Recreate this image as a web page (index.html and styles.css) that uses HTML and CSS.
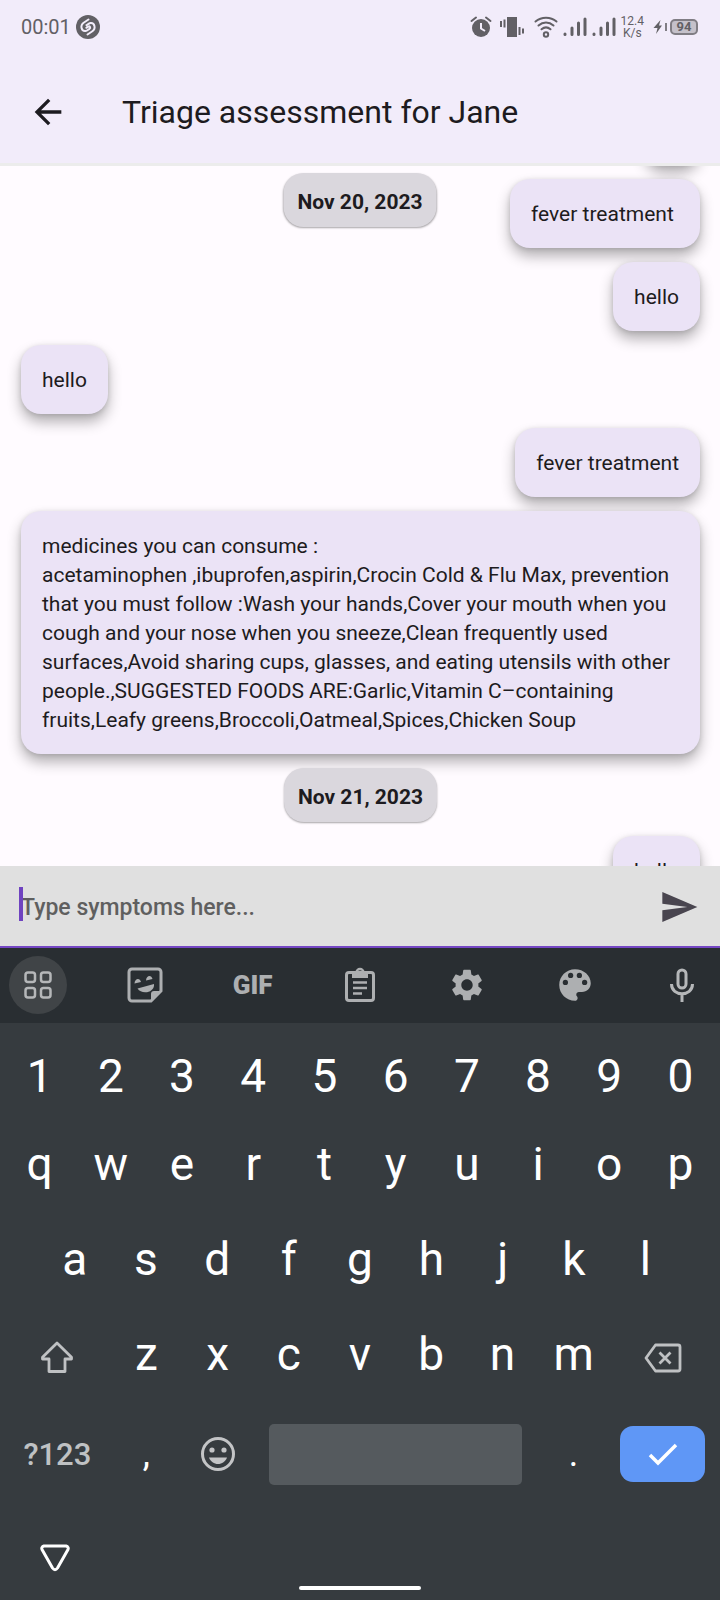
FILE: index.html
```html
<!DOCTYPE html>
<html lang="en">
<head>
    <meta charset="UTF-8">
    <meta name="viewport" content="width=device-width, initial-scale=1.0">
    <title>Triage assessment for Jane</title>
    <link rel="stylesheet" href="styles.css">
</head>
<body>
    <header class="header">
        <div class="status-bar">
            <span class="clock">00:01</span>
            <svg class="shazam" width="24" height="24" viewBox="0 0 24 24">
                <circle cx="12" cy="12" r="12" fill="#626065"/>
                <path d="M12.500 4.500 8 7.500C3.500 10.500 5.500 16.500 9.500 16c1.500-.2 2.500-1.200 4-2.200 1.500-1.200.3-3-1.200-2.200l-2 1.200M11.500 19.500l4.500-3c4.500-3 2.500-9-1.500-8.500-1.500.2-2.500 1.200-4 2.200" fill="none" stroke="#f2ecfa" stroke-width="2" stroke-linecap="round"/>
            </svg>
            <div class="status-icons">
                <svg width="22" height="22" viewBox="0 0 22 22" fill="none" stroke="#626065">
                    <circle cx="11" cy="12" r="9" fill="#626065" stroke="none"/>
                    <path d="M1.500 5 6 1.500M16 1.500 20.500 5" stroke-width="2" stroke-linecap="round"/>
                    <path d="M11 7v5.500l4 2.500" stroke="#f2ecfa" stroke-width="2"/>
                </svg>
                <svg class="vibrate" width="24" height="22" viewBox="0 0 24 22" fill="none" stroke="#626065" stroke-width="2">
                    <path d="M7 1h10v20H7z" fill="#626065" stroke="none"/>
                    <path d="M1 5v6M4.500 3.500v8M19.500 11v8M23 12.500v5"/>
                </svg>
                <svg width="24" height="22" viewBox="0 0 24 22" fill="none" stroke="#626065" stroke-width="2" stroke-linecap="round">
                    <path d="M1.500 5.500c6-5 15-5 21 0M4.500 9.500c4.500-4 10.500-4 15 0M7.500 13.300c2.700-2.300 6.300-2.300 9 0"/>
                    <circle cx="12" cy="18.500" r="2.200"/>
                </svg>
                <svg width="24" height="20" viewBox="0 0 24 20" fill="none" stroke="#626065" stroke-width="3" stroke-linecap="round">
                    <path d="M2 17v.5M9 11v6.500M15.500 6v11.500M22 2v15.500"/>
                </svg>
                <svg width="24" height="20" viewBox="0 0 24 20" fill="none" stroke="#626065" stroke-width="3" stroke-linecap="round">
                    <path d="M2 17v.5M9 11v6.500M15.500 6v11.500M22 2v15.500"/>
                </svg>
                <span class="speed">12.4<br>K/s</span>
                <svg class="bolt" width="12" height="14" viewBox="0 0 12 14">
                    <path d="M7.500 0 .5 8h4L3 14l6-8.500H6z" fill="#626065"/>
                </svg>
                <span class="battery">94</span>
            </div>
        </div>
        <div class="app-bar">
            <button class="back" aria-label="Back">
                <svg width="40" height="40" viewBox="0 0 24 24" fill="#1d1b20">
                    <path d="M20 11H7.830l5.590-5.590L12 4l-8 8 8 8 1.410-1.410L7.830 13H20z"/>
                </svg>
            </button>
            <h1>Triage assessment for Jane</h1>
        </div>
    </header>

    <main class="chat">
        <div class="date floating">Nov 20, 2023</div>
        <!-- newest message first, the list runs bottom to top -->
        <div class="messages">
            <div class="bubble sent">hello</div>
            <div class="date">Nov 21, 2023</div>
            <div class="bubble">medicines you can consume :<br>acetaminophen ,ibuprofen,aspirin,Crocin Cold &amp; Flu Max, prevention that you must follow :Wash your hands,Cover your mouth when you cough and your nose when you sneeze,Clean frequently used surfaces,Avoid sharing cups, glasses, and eating utensils with other people.,SUGGESTED FOODS ARE:Garlic,Vitamin C–containing fruits,Leafy greens,Broccoli,Oatmeal,Spices,Chicken Soup</div>
            <div class="bubble sent">fever treatment</div>
            <div class="bubble">hello</div>
            <div class="bubble sent">hello</div>
            <div class="bubble sent">fever treatment&nbsp;</div>
            <div class="bubble sent scrolled-off"></div>
        </div>
    </main>

    <form class="composer">
        <span class="caret"></span>
        <input type="text" aria-label="Type symptoms here" placeholder="Type symptoms here...">
        <button type="button" aria-label="Send">
            <svg width="40" height="40" viewBox="0 0 24 24" fill="#49454f">
                <path d="M2 21 23 12 2 3v7l15 2-15 2z"/>
            </svg>
        </button>
    </form>

    <section class="keyboard">
        <div class="toolbar">
            <button class="active" aria-label="Apps">
                <svg width="28" height="28" viewBox="0 0 28 28" fill="none" stroke="#b5b7b9" stroke-width="2.500">
                    <rect x="1.500" y="1.500" width="9.500" height="9.500" rx="2.500"/>
                    <rect x="17" y="1.500" width="9.500" height="9.500" rx="2.500"/>
                    <rect x="1.500" y="17" width="9.500" height="9.500" rx="2.500"/>
                    <rect x="17" y="17" width="9.500" height="9.500" rx="2.500"/>
                </svg>
            </button>
            <button aria-label="Stickers">
                <svg width="36" height="36" viewBox="0 0 36 36" fill="#adafb1">
                    <path d="M5 2h26a3 3 0 0 1 3 3v19L24 34H5a3 3 0 0 1-3-3V5a3 3 0 0 1 3-3z" fill="none" stroke="#adafb1" stroke-width="3"/>
                    <path d="M24 35v-8a3 3 0 0 1 3-3h8z"/>
                    <path d="M10.500 21.500 27 17c.5 4-2.500 7.500-7 8.200-4 .6-7.500-.7-9.500-3.700z"/>
                    <path d="M7.500 16.500c.3-5.500 5.500-6 6.500-1.500zM19 13.500c.3-5.500 5.500-6 6.500-1.500z"/>
                </svg>
            </button>
            <button class="gif">GIF</button>
            <button aria-label="Clipboard">
                <svg width="30" height="36" viewBox="0 0 30 36" fill="none" stroke="#adafb1" stroke-width="3">
                    <rect x="1.500" y="5.500" width="27" height="28" rx="2.500"/>
                    <path d="M7 7h16v4H7z" fill="#adafb1" stroke="none"/>
                    <circle cx="15" cy="5.500" r="3.500" stroke-width="2.500"/>
                    <path d="M8 15.500h14M8 21h14M8 26.500h9" stroke-width="2.500"/>
                </svg>
            </button>
            <button aria-label="Settings">
                <svg width="38" height="38" viewBox="0 0 24 24" fill="#adafb1">
                    <path d="M19.140 12.940c.04-.3.06-.61.06-.94 0-.32-.02-.64-.07-.94l2.030-1.580c.18-.14.23-.41.12-.61l-1.920-3.320c-.12-.22-.37-.29-.59-.22l-2.390.96c-.5-.38-1.030-.7-1.620-.94l-.36-2.540c-.04-.24-.24-.41-.48-.41h-3.840c-.24 0-.43.17-.47.41l-.36 2.540c-.59.24-1.130.57-1.620.94l-2.390-.96c-.22-.08-.47 0-.59.22L2.740 8.870c-.12.21-.08.47.12.61l2.030 1.580c-.05.3-.09.63-.09.94s.02.64.07.94l-2.030 1.580c-.18.14-.23.41-.12.61l1.920 3.320c.12.22.37.29.59.22l2.390-.96c.5.38 1.030.7 1.620.94l.36 2.540c.05.24.24.41.48.41h3.840c.24 0 .44-.17.47-.41l.36-2.540c.59-.24 1.130-.56 1.620-.94l2.390.96c.22.08.47 0 .59-.22l1.920-3.320c.12-.22.07-.47-.12-.61zM12 15.600c-1.980 0-3.600-1.620-3.600-3.600s1.620-3.600 3.600-3.600 3.600 1.620 3.600 3.600-1.620 3.600-3.600 3.600z"/>
                </svg>
            </button>
            <button aria-label="Themes">
                <svg width="42" height="42" viewBox="0 0 24 24" fill="#adafb1">
                    <path d="M12 3c-4.970 0-9 4.030-9 9s4.030 9 9 9c.83 0 1.500-.67 1.500-1.500 0-.39-.15-.74-.39-1.010-.23-.26-.38-.61-.38-.99 0-.83.67-1.500 1.500-1.500H16c2.760 0 5-2.240 5-5 0-4.420-4.030-8-9-8z"/>
                    <g fill="#292e32">
                        <circle cx="6.500" cy="10.500" r="1.500"/>
                        <circle cx="9.500" cy="6.500" r="1.500"/>
                        <circle cx="14.500" cy="6.500" r="1.500"/>
                        <circle cx="17.500" cy="10.500" r="1.500"/>
                    </g>
                </svg>
            </button>
            <button aria-label="Voice input">
                <svg width="26" height="34" viewBox="0 0 26 34" fill="none" stroke="#b5b7b9" stroke-width="3">
                    <rect x="9" y="2" width="8" height="18" rx="4"/>
                    <path d="M2.500 16c0 13 21 13 21 0M13 26v8"/>
                </svg>
            </button>
        </div>

        <div class="keys">
            <div class="row numbers">
                <button>1</button><button>2</button><button>3</button><button>4</button><button>5</button>
                <button>6</button><button>7</button><button>8</button><button>9</button><button>0</button>
            </div>
            <div class="row">
                <button>q</button><button>w</button><button>e</button><button>r</button><button>t</button>
                <button>y</button><button>u</button><button>i</button><button>o</button><button>p</button>
            </div>
            <div class="row middle">
                <button>a</button><button>s</button><button>d</button><button>f</button><button>g</button>
                <button>h</button><button>j</button><button>k</button><button>l</button>
            </div>
            <div class="row">
                <button class="wide" aria-label="Shift">
                    <svg width="34" height="38" viewBox="0 -6 34 38">
                        <path d="M17 2 2.500 16.200V18H9v12.500h16V18h6.500v-1.800z" fill="none" stroke="#bfc1c3" stroke-width="2.800" stroke-linejoin="round"/>
                    </svg>
                </button>
                <button>z</button><button>x</button><button>c</button><button>v</button>
                <button>b</button><button>n</button><button>m</button>
                <button class="wide" aria-label="Backspace">
                    <svg width="38" height="38" viewBox="0 -8 38 38" fill="none" stroke="#bfc1c3" stroke-width="2.800" stroke-linejoin="round">
                        <path d="M11.500 2H34a2 2 0 0 1 2 2v22a2 2 0 0 1-2 2H11.500L2 15z"/>
                        <path d="m15.500 9.500 11 11M26.500 9.500l-11 11"/>
                    </svg>
                </button>
            </div>
            <div class="bottom">
                <button class="symbols">?123</button>
                <button>,</button>
                <button aria-label="Emoji">
                    <svg width="36" height="36" viewBox="0 0 36 36" fill="#c3c4c6">
                        <circle cx="18" cy="18" r="15.500" fill="none" stroke="#c3c4c6" stroke-width="3"/>
                        <circle cx="12" cy="14" r="2.600"/>
                        <circle cx="24" cy="14" r="2.600"/>
                        <path d="M9 21.500h18c-1.500 4-5 6.500-9 6.500s-7.500-2.500-9-6.500z"/>
                    </svg>
                </button>
                <button class="space" aria-label="Space"></button>
                <button>.</button>
                <button class="enter" aria-label="Done">
                    <svg width="32" height="26" viewBox="0 0 32 26">
                        <path d="m3 14 8 8L29 4" fill="none" stroke="#fff" stroke-width="3.500"/>
                    </svg>
                </button>
            </div>
        </div>

        <div class="nav">
            <button class="hide" aria-label="Hide keyboard">
                <svg width="30" height="28" viewBox="0 0 30 28">
                    <path d="M4 2h22q3 1 2 3.500L17.500 24q-2.500 3.500-5 0L2 5.500Q1 3 4 2z" fill="none" stroke="#fff" stroke-width="3" stroke-linejoin="round"/>
                </svg>
            </button>
            <div class="home-bar"></div>
        </div>
    </section>
</body>
</html>
```

FILE: styles.css
```css
* {
    box-sizing: border-box;
}

body {
    margin: 0;
    height: 100vh;
    display: flex;
    flex-direction: column;
    font-family: Roboto, sans-serif;
    color: #1d1b20;
    background: #fffbff;
}

button {
    display: flex;
    align-items: center;
    justify-content: center;
    padding: 0;
    border: none;
    background: none;
    font-family: inherit;
    cursor: pointer;
}

svg {
    display: block;
    flex-shrink: 0;
}

/* Header */
.header {
    background: #f2ecfa;
    border-bottom: 3px solid #ececec;
}

.status-bar {
    display: flex;
    align-items: center;
    height: 54px;
    padding: 0 22px 0 21px;
    color: #626065;
}

.clock {
    font-size: 20px;
}

.shazam {
    margin-left: 5px;
}

.status-icons {
    display: flex;
    align-items: center;
    gap: 5px;
    margin-left: auto;
}

.vibrate {
    margin: 0 5px 0 3px;
}

.speed {
    font-size: 12px;
    line-height: 12px;
    text-align: center;
}

.bolt {
    margin-left: 4px;
}

.battery {
    position: relative;
    width: 28px;
    height: 16px;
    border: 2px solid #807d84;
    border-radius: 5px;
    background: #c5c1ca;
    font-size: 13px;
    font-weight: 700;
    line-height: 12px;
    text-align: center;
}

.battery::before {
    content: "";
    position: absolute;
    left: -7px;
    top: 2px;
    width: 2px;
    height: 8px;
    background: #807d84;
}

.app-bar {
    display: flex;
    align-items: center;
    height: 109px;
    padding: 6px 28px 0;
}

.back {
    margin-right: 54px;
}

h1 {
    margin: 0;
    font-size: 32px;
    font-weight: 400;
}

/* Chat */
.chat {
    position: relative;
    flex: 1;
    min-height: 0;
    overflow: hidden;
}

.messages {
    display: flex;
    flex-direction: column-reverse;
    align-items: flex-start;
    gap: 14px;
    padding: 0 20px 0 21px;
}

.bubble {
    min-width: 56px;
    padding: 21px 21px 19px;
    border-radius: 20px;
    background: #ebe3f6;
    box-shadow: 0 8px 14px rgba(0, 0, 0, 0.3), 0 1px 5px rgba(0, 0, 0, 0.12);
    font-size: 21px;
    line-height: 29px;
}

.sent {
    align-self: flex-end;
}

.scrolled-off {
    height: 69px;
    margin-top: -70px;
}

.date {
    align-self: center;
    padding: 16px 14px 12px;
    border-radius: 20px;
    background: #dad7dd;
    box-shadow: 0 1px 2px rgba(0, 0, 0, 0.35);
    font-size: 21px;
    font-weight: 700;
    line-height: 26px;
    white-space: nowrap;
}

.floating {
    position: absolute;
    top: 7px;
    left: 50%;
    transform: translateX(-50%);
}

/* Message input */
.composer {
    position: relative;
    display: flex;
    align-items: center;
    height: 82px;
    padding: 2px 21px 0;
    background: #e0e0e0;
    border-bottom: 2px solid #7547c4;
}

.composer input {
    flex: 1;
    min-width: 0;
    padding: 0;
    border: none;
    outline: none;
    background: none;
    font-family: inherit;
    font-size: 23px;
    font-weight: 500;
}

.composer input::placeholder {
    color: #5f5f5f;
}

.caret {
    position: absolute;
    left: 19px;
    top: 21px;
    width: 4px;
    height: 34px;
    background: #6f43c0;
}

/* Keyboard */
.keyboard {
    background: #363b3f;
}

.toolbar {
    display: flex;
    align-items: center;
    justify-content: space-between;
    height: 75px;
    padding: 0 9px 2px;
    background: #292e32;
}

.toolbar button {
    width: 58px;
    height: 58px;
    border-radius: 50%;
}

.toolbar .active {
    background: #404447;
}

.toolbar .gif {
    color: #adafb1;
    font-size: 26px;
    font-weight: 900;
}

.keys {
    padding: 13px 4px 0;
}

.keys button {
    color: #fff;
    font-size: 46px;
}

.row {
    display: flex;
    height: 95px;
}

.row button {
    flex: 2 1 0;
}

.row .wide {
    flex-grow: 3;
}

.numbers {
    height: 80px;
}

.middle {
    padding: 0 35px;
}

.bottom {
    display: grid;
    grid-template-columns: 3fr 2fr 2fr 8fr 2fr 3fr;
    align-items: center;
    height: 106px;
}

.bottom button {
    font-size: 36px;
}

.bottom .symbols {
    color: #bfc1c3;
    font-size: 31px;
    font-weight: 500;
}

.space {
    height: 61px;
    margin: 0 16px;
    border-radius: 5px;
    background: #555a5e;
}

.enter {
    height: 56px;
    margin: 0 11px;
    border-radius: 13px;
    background: #5f97f6;
}

.nav {
    display: flex;
    flex-direction: column;
    justify-content: space-between;
    height: 93px;
    padding: 37px 40px 10px;
}

.hide {
    align-self: flex-start;
}

.home-bar {
    align-self: center;
    width: 122px;
    height: 4px;
    border-radius: 2px;
    background: #fff;
}
```
